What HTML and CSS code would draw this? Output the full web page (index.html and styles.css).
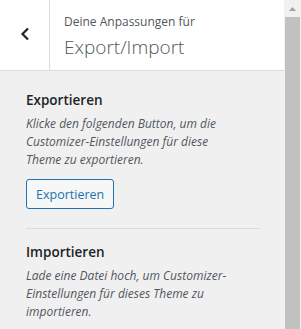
FILE: index.html
```html
<!DOCTYPE html>
<html lang="de">
<head>
  <meta charset="UTF-8">
  <title>Export/Import</title>
  <link rel="stylesheet" href="styles.css">
</head>
<body>
  <div class="panel">
    <div class="panel-main">
      <div class="panel-head">
        <button class="back-btn" aria-label="Zurück">
          <svg width="12" height="14" viewBox="0 0 12 14"><path d="M9 1.5L3.5 7L9 12.5" fill="none" stroke="#1d2327" stroke-width="2.2"/></svg>
        </button>
        <div class="head-title">
          <span class="head-sub">Deine Anpassungen für</span>
          <span class="head-main">Export/Import</span>
        </div>
      </div>

      <div class="section">
        <h3>Exportieren</h3>
        <p class="desc">Klicke den folgenden Button, um die Customizer-Einstellungen für diese Theme zu exportieren.</p>
        <button class="btn-outline">Exportieren</button>
      </div>

      <hr class="sep">

      <div class="section section-next">
        <h3>Importieren</h3>
        <p class="desc">Lade eine Datei hoch, um Customizer-Einstellungen für dieses Theme zu importieren.</p>
      </div>
    </div>

    <div class="scrollbar">
      <div class="scroll-up">
        <svg width="7" height="4" viewBox="0 0 7 4"><path d="M0 4L3.5 0L7 4Z" fill="#a3a3a3"/></svg>
      </div>
      <div class="scroll-thumb"></div>
    </div>
  </div>
</body>
</html>
```

FILE: styles.css
```css
* { box-sizing: border-box; }
html, body { height: 100%; }
body {
  margin: 0;
  font-family: "Open Sans", "Noto Sans", sans-serif;
  background: #f0f0f1;
  color: #1d2327;
  overflow: hidden;
}
.panel {
  display: flex;
  height: 100%;
}
.panel-main {
  flex: 1;
  background: #f0f0f1;
}
.panel-head {
  display: flex;
  height: 71px;
  background: #fff;
  border-bottom: 1px solid #dcdcde;
}
.back-btn {
  width: 50px;
  border: none;
  border-right: 1px solid #dcdcde;
  background: #fff;
  display: flex;
  align-items: center;
  justify-content: center;
  padding: 0 0 2px 0;
}
.head-title {
  display: flex;
  flex-direction: column;
  padding: 12px 0 0 14px;
}
.head-sub {
  font-size: 12px;
  line-height: 20px;
  color: #50575e;
}
.head-main {
  font-size: 19px;
  font-weight: 300;
  line-height: 30px;
  color: #50575e;
}
.section {
  padding: 0 40px 0 26px;
}
.section h3 {
  margin: 19px 0 0 0;
  font-size: 13.5px;
  font-weight: 600;
  line-height: 20px;
}
.section-next h3 { margin-top: 13px; }
.desc {
  margin: 5px 0 0 0;
  font-size: 12px;
  font-style: italic;
  line-height: 18px;
  color: #50575e;
}
.btn-outline {
  margin-top: 10px;
  font-family: inherit;
  font-size: 12.5px;
  color: #2271b1;
  background: #f6f7f7;
  border: 1px solid #2271b1;
  border-radius: 3px;
  height: 30px;
  padding: 0 9px;
}
.sep {
  margin: 19px 24px 0 26px;
  border: none;
  border-top: 1px solid #dcdcde;
}
.scrollbar {
  width: 17px;
  background: #f1f1f1;
  display: flex;
  flex-direction: column;
}
.scroll-up {
  height: 17px;
  display: flex;
  align-items: center;
  justify-content: center;
}
.scroll-thumb {
  flex: 1;
  margin: 0 1px;
  background: #c1c1c1;
}
```
